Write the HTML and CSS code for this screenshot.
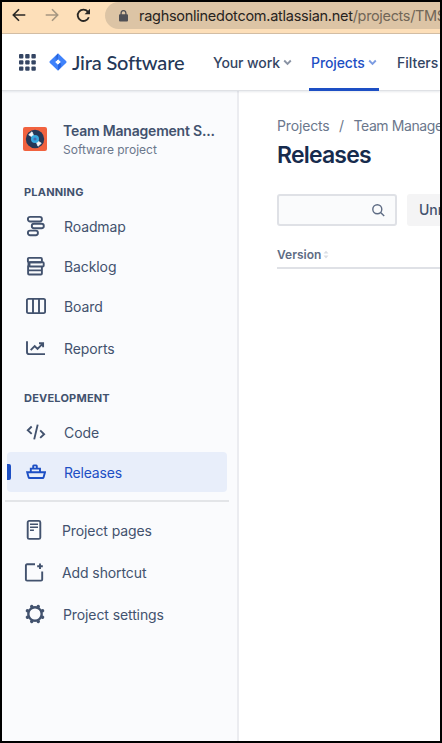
FILE: index.html
```html
<!DOCTYPE html>
<html lang="en">
<head>
<meta charset="utf-8">
<title>Releases - Jira Software</title>
<link rel="stylesheet" href="styles.css">
</head>
<body>
<div class="window">
  <div class="browser">
    <svg class="back" width="14" height="14" viewBox="0 0 14 14"><path d="M13.3 7H1.5M7 1.3 1.3 7 7 12.7"/></svg>
    <svg class="forward" width="14" height="14" viewBox="0 0 14 14"><path d="M.7 7h11.8M7 1.3 12.7 7 7 12.7"/></svg>
    <svg class="reload" width="15" height="15" viewBox="0 0 15 15"><path d="M12.8 9.2A5.7 5.7 0 1 1 11.8 3.6L13 5"/><path class="solid" d="M14 .8v5.4H8.6z"/></svg>
    <div class="address">
      <svg width="9" height="12" viewBox="0 0 9 12"><rect y="4.3" width="9" height="7.2" rx="1" fill="#505055"/><path d="M2.1 5V3a2.4 2.4 0 0 1 4.8 0v2" fill="none" stroke="#505055" stroke-width="1.3"/></svg>
      <span class="url">raghsonlinedotcom.atlassian.net<span class="path">/projects/TMS</span></span>
    </div>
  </div>
  <header class="nav">
    <svg class="switcher" width="17" height="17" viewBox="0 0 17 17"><g fill="#344563"><rect width="4.4" height="4.4" rx="1"/><rect x="6.2" width="4.4" height="4.4" rx="1"/><rect x="12.4" width="4.4" height="4.4" rx="1"/><rect y="6.2" width="4.4" height="4.4" rx="1"/><rect x="6.2" y="6.2" width="4.4" height="4.4" rx="1"/><rect x="12.4" y="6.2" width="4.4" height="4.4" rx="1"/><rect y="12.4" width="4.4" height="4.4" rx="1"/><rect x="6.2" y="12.4" width="4.4" height="4.4" rx="1"/><rect x="12.4" y="12.4" width="4.4" height="4.4" rx="1"/></g></svg>
    <svg class="mark" width="18" height="18" viewBox="0 0 18 18"><defs><linearGradient id="a" x1="1" y1="0" x2=".3" y2="1"><stop offset="0" stop-color="#1d56c9"/><stop offset="1" stop-color="#3f82fb"/></linearGradient></defs><path fill="#3f82fb" fill-rule="evenodd" d="M9 .3 17.3 8.3q.6.7 0 1.4L9 17.8.7 9.7q-.6-.7 0-1.4zM9 6.2 6.2 9 9 11.8 11.8 9z"/><path fill="url(#a)" d="M9 .8v5.4L6.7 8.5Q4 5.5 9 .8z"/><path fill="#2864df" d="m9 11.8 2.3-2.3Q14 13 9 17.2z"/></svg>
    <span class="brand">Jira Software</span>
    <span class="menu work"><span>Your work</span><svg width="9" height="7" viewBox="0 0 9 7"><path d="m1.2 1.5 3.3 3.3 3.3-3.3"/></svg></span>
    <span class="menu projects"><span>Projects</span><svg width="9" height="7" viewBox="0 0 9 7"><path d="m1.2 1.5 3.3 3.3 3.3-3.3"/></svg></span>
    <span class="menu filters"><span>Filters</span></span>
  </header>
  <div class="body">
    <aside class="sidebar">
      <div class="project">
        <svg width="24" height="24" viewBox="0 0 24 24"><rect width="24" height="24" rx="2" fill="#f1623f"/><circle cx="12" cy="12" r="9.2" fill="#253858"/><path d="M12 12 5.7 7.7 9 4.8zM12 12l6.3 4.3-3.3 2.9z" fill="#f4f5f7" stroke="#f4f5f7" stroke-width=".8"/><circle cx="12" cy="12" r="4" fill="#36a9df"/><circle cx="12" cy="12" r="1.6" fill="#4768b2"/></svg>
        <div><div class="project-name">Team Management S...</div><div class="project-type">Software project</div></div>
      </div>
      <h2 class="planning">PLANNING</h2>
      <a class="item"><svg width="20" height="22" viewBox="0 0 20 22"><rect x="1.9" y="1.9" width="14" height="4.6" rx="2.2"/><rect x="5.8" y="8.7" width="12" height="4.6" rx="2.2"/><rect x="1.9" y="15.6" width="10" height="4.6" rx="2.2"/></svg><span class="roadmap">Roadmap</span></a>
      <a class="item"><svg width="20" height="20" viewBox="0 0 20 20"><rect x="1.9" y="1.9" width="14" height="4.3" rx="1"/><rect x="3.5" y="6.2" width="14.2" height="4.3" rx="1"/><path d="M3.5 10.5H2.1v7q0 1 1 1h11.8q1 0 1-1v-7M2.1 14.4h13.8M2.5 6.2v4.3"/></svg><span class="backlog">Backlog</span></a>
      <a class="item board"><svg width="20" height="18" viewBox="0 0 20 18"><rect x=".9" y="1.9" width="18.2" height="14.2" rx="1.4"/><path d="M7 2v14M13 2v14"/></svg><span>Board</span></a>
      <a class="item reports"><svg width="20" height="18" viewBox="0 0 20 18"><path d="M1 2.2v10.7q0 2.2 2.2 2.2H19M4.7 11.1l4-4 2.8 2.8 5-5M13 4.2h4.1v4.1"/></svg><span>Reports</span></a>
      <h2 class="development">DEVELOPMENT</h2>
      <a class="item code"><svg width="20" height="18" viewBox="0 0 20 18"><path d="M5.7 3.5 1.8 7.3l3.9 3.6M14.2 7.4l3.9 3.8-3.9 3.7M11.7 1.6 8.2 16.4"/></svg><span>Code</span></a>
      <a class="item selected"><svg width="20" height="18" viewBox="0 0 20 18"><path d="M1.2 9.2H19L17.6 14.2q-.2.8-1 .8H3.6q-.8 0-1-.8zM4.8 9V5.6H14V9M7.2 5.5V3q0-.6.6-.6h2.4q.6 0 .6.6v2.5"/></svg><span>Releases</span></a>
      <hr>
      <a class="item pages"><svg width="20" height="22" viewBox="0 0 20 22"><rect x="3.7" y="1.9" width="12.6" height="18" rx="1.5"/><path d="M6 5.3h8M6 8.3h8M6 11.3h3.9"/></svg><span>Project pages</span></a>
      <a class="item shortcut"><svg width="20" height="20" viewBox="0 0 20 20"><path d="M11 2.3H3.1q-1.2 0-1.2 1.2v13.9q0 1.2 1.2 1.2H17q1.2 0 1.2-1.2V9.6M16 1.5v5.6M13.2 4.3h5.6"/></svg><span>Add shortcut</span></a>
      <a class="item settings"><svg width="20" height="20" viewBox="0 0 20 20"><circle cx="10" cy="10" r="6.7"/><g class="teeth"><path d="M7 3 6.7 2.4M13 3l.3-.6M17 7l.6-.3M17 13l.6.3M13 17l.3.6M7 17l-.3.6M3 13l-.6.3M3 7l-.6-.3"/></g></svg><span>Project settings</span></a>
    </aside>
    <main>
      <div class="crumbs"><span>Projects</span><span class="slash">/</span><span class="current">Team Management</span></div>
      <h1>Releases</h1>
      <div class="tools"><div class="search"><svg width="13" height="13" viewBox="0 0 13 13"><circle cx="5.3" cy="5.3" r="4.5"/><path d="m8.6 8.6 3.6 3.4"/></svg></div><div class="status">Unreleased</div></div>
      <div class="table-head"><span>Version</span><svg width="6" height="9" viewBox="0 0 6 9"><path d="M.5 3.6 3 .8l2.5 2.8zM.5 5.6 3 8.4l2.5-2.8z"/></svg></div>
    </main>
  </div>
</div>
</body>
</html>
```

FILE: styles.css
```css
* { box-sizing: border-box; }
body { margin: 0; background: #000; font-family: Inter, sans-serif; color: #42526e; }
svg { display: block; flex: none; }
.window { width: 442px; height: 743px; border: 2px solid #000; background: #fff; overflow: hidden; display: flex; flex-direction: column; white-space: nowrap; }
.browser { height: 32px; flex: none; background: #fddfb9; border-bottom: 1px solid #d3bea5; display: flex; align-items: flex-start; padding-left: 10px; }
.browser > svg { margin-top: 6px; fill: none; stroke: #292724; stroke-width: 1.6; }
.browser .forward { margin-left: 19px; stroke: #a69781; }
.browser .reload { margin-left: 17px; stroke-width: 1.8; }
.browser .solid { fill: #292724; stroke: none; }
.address { margin-left: 14px; width: 380px; height: 27px; flex: none; border-radius: 14px 0 0 14px; background: #dcc4a5; display: flex; align-items: center; padding-left: 14px; }
.url { margin-left: 11px; font-size: 14.5px; color: #27231e; letter-spacing: -.27px; }
.path { color: #716657; letter-spacing: -.34px; }
.nav { height: 57px; flex: none; display: flex; align-items: center; padding-left: 17px; background: #fff; color: #344563; border-bottom: 1px solid #dfe1e5; box-shadow: 0 1px 2px #091e4218; z-index: 1; }
.mark { margin-left: 13px; }
.brand { font-family: Lato, sans-serif; font-size: 20px; margin-left: 5px; width: 141px; font-weight: 500; color: #253858; letter-spacing: -.2px; }
.menu { height: 57px; display: flex; align-items: center; font-size: 14px; font-weight: 500; flex: none; letter-spacing: -.1px; }
.menu svg { fill: none; stroke: #8993a4; stroke-width: 1.9; margin-left: 3px; }
.work { width: 96px; }
.projects { color: #1d4fc4; width: 70px; padding-left: 2px; border-bottom: 3px solid #1d4fc4; padding-top: 3px; }
.projects svg { stroke: #7c9ce2; }
.filters { margin-left: 18px; letter-spacing: 0; }
.body { display: flex; flex: 1; }
.sidebar { width: 237px; flex: none; background: #fafbfd; border-right: 2px solid #ebecf0; padding-top: 31px; }
.project { display: flex; align-items: flex-start; padding-left: 21px; gap: 16px; height: 62px; }
.project svg { margin-top: 5px; }
.project-name { font-size: 14px; line-height: 18px; font-weight: 600; letter-spacing: -.2px; }
.project-type { font-size: 12px; line-height: 20px; color: #6b778c; }
h2 { margin: 0; padding-left: 22px; font-size: 11px; font-weight: 700; line-height: 16px; height: 22px; letter-spacing: .2px; }
.item { display: flex; align-items: center; height: 40px; padding-left: 24px; font-size: 14px; gap: 18px; letter-spacing: -.1px; }
.item svg { fill: none; stroke: #42526e; stroke-width: 1.9; }
.reports { margin-top: 2px; }
.development { margin-top: 22px; }
.selected { position: relative; margin: 0 10px 0 5px; padding-left: 19px; border-radius: 4px; background: #e8eefa; color: #1d4fc4; letter-spacing: -.2px; }
.selected svg { stroke: #1d4fc4; }
.selected::before { content: ""; position: absolute; left: 0; top: 12px; width: 4px; height: 16px; background: #1d4fc4; border-radius: 0 2px 2px 0; }
hr { margin: 8px 8px 0 3px; border: 0; height: 2px; background: #e3e5e8; }
.pages { margin-top: 8px; padding-left: 22px; }
.pages path { stroke-width: 1.5; }
.shortcut { margin-top: 2px; padding-left: 22px; }
.settings { margin-top: 2px; padding-left: 23px; }
.settings svg { stroke-width: 2.4; }
.settings .teeth { stroke-width: 3.4; stroke-linecap: round; }
main { flex: none; width: 300px; padding: 26px 0 0 38px; }
.crumbs { display: flex; font-size: 14px; line-height: 18px; color: #6b778c; letter-spacing: -.15px; }
.slash { margin: 0 9.5px; }
.current { letter-spacing: -.4px; }
h1 { margin: 6px 0 0; font-size: 23px; line-height: 28px; font-weight: 600; color: #172b4d; letter-spacing: -.8px; }
.tools { display: flex; margin-top: 25px; gap: 10px; }
.search { width: 120px; height: 32px; border: 2px solid #dfe1e6; border-radius: 3px; background: #fafbfc; display: flex; align-items: center; justify-content: flex-end; padding-right: 10px; }
.search svg { fill: none; stroke: #5e6c84; stroke-width: 1.4; }
.status { height: 32px; line-height: 32px; width: 120px; padding-left: 12px; background: #f4f4f5; border-radius: 3px; font-size: 14px; font-weight: 500; }
.table-head { display: flex; align-items: center; height: 43px; padding-top: 16px; padding-bottom: 1px; border-bottom: 2px solid #dfe1e6; font-size: 12px; font-weight: 600; color: #5e6c84; }
.table-head svg { fill: #dadde3; margin-left: 2px; }
```
